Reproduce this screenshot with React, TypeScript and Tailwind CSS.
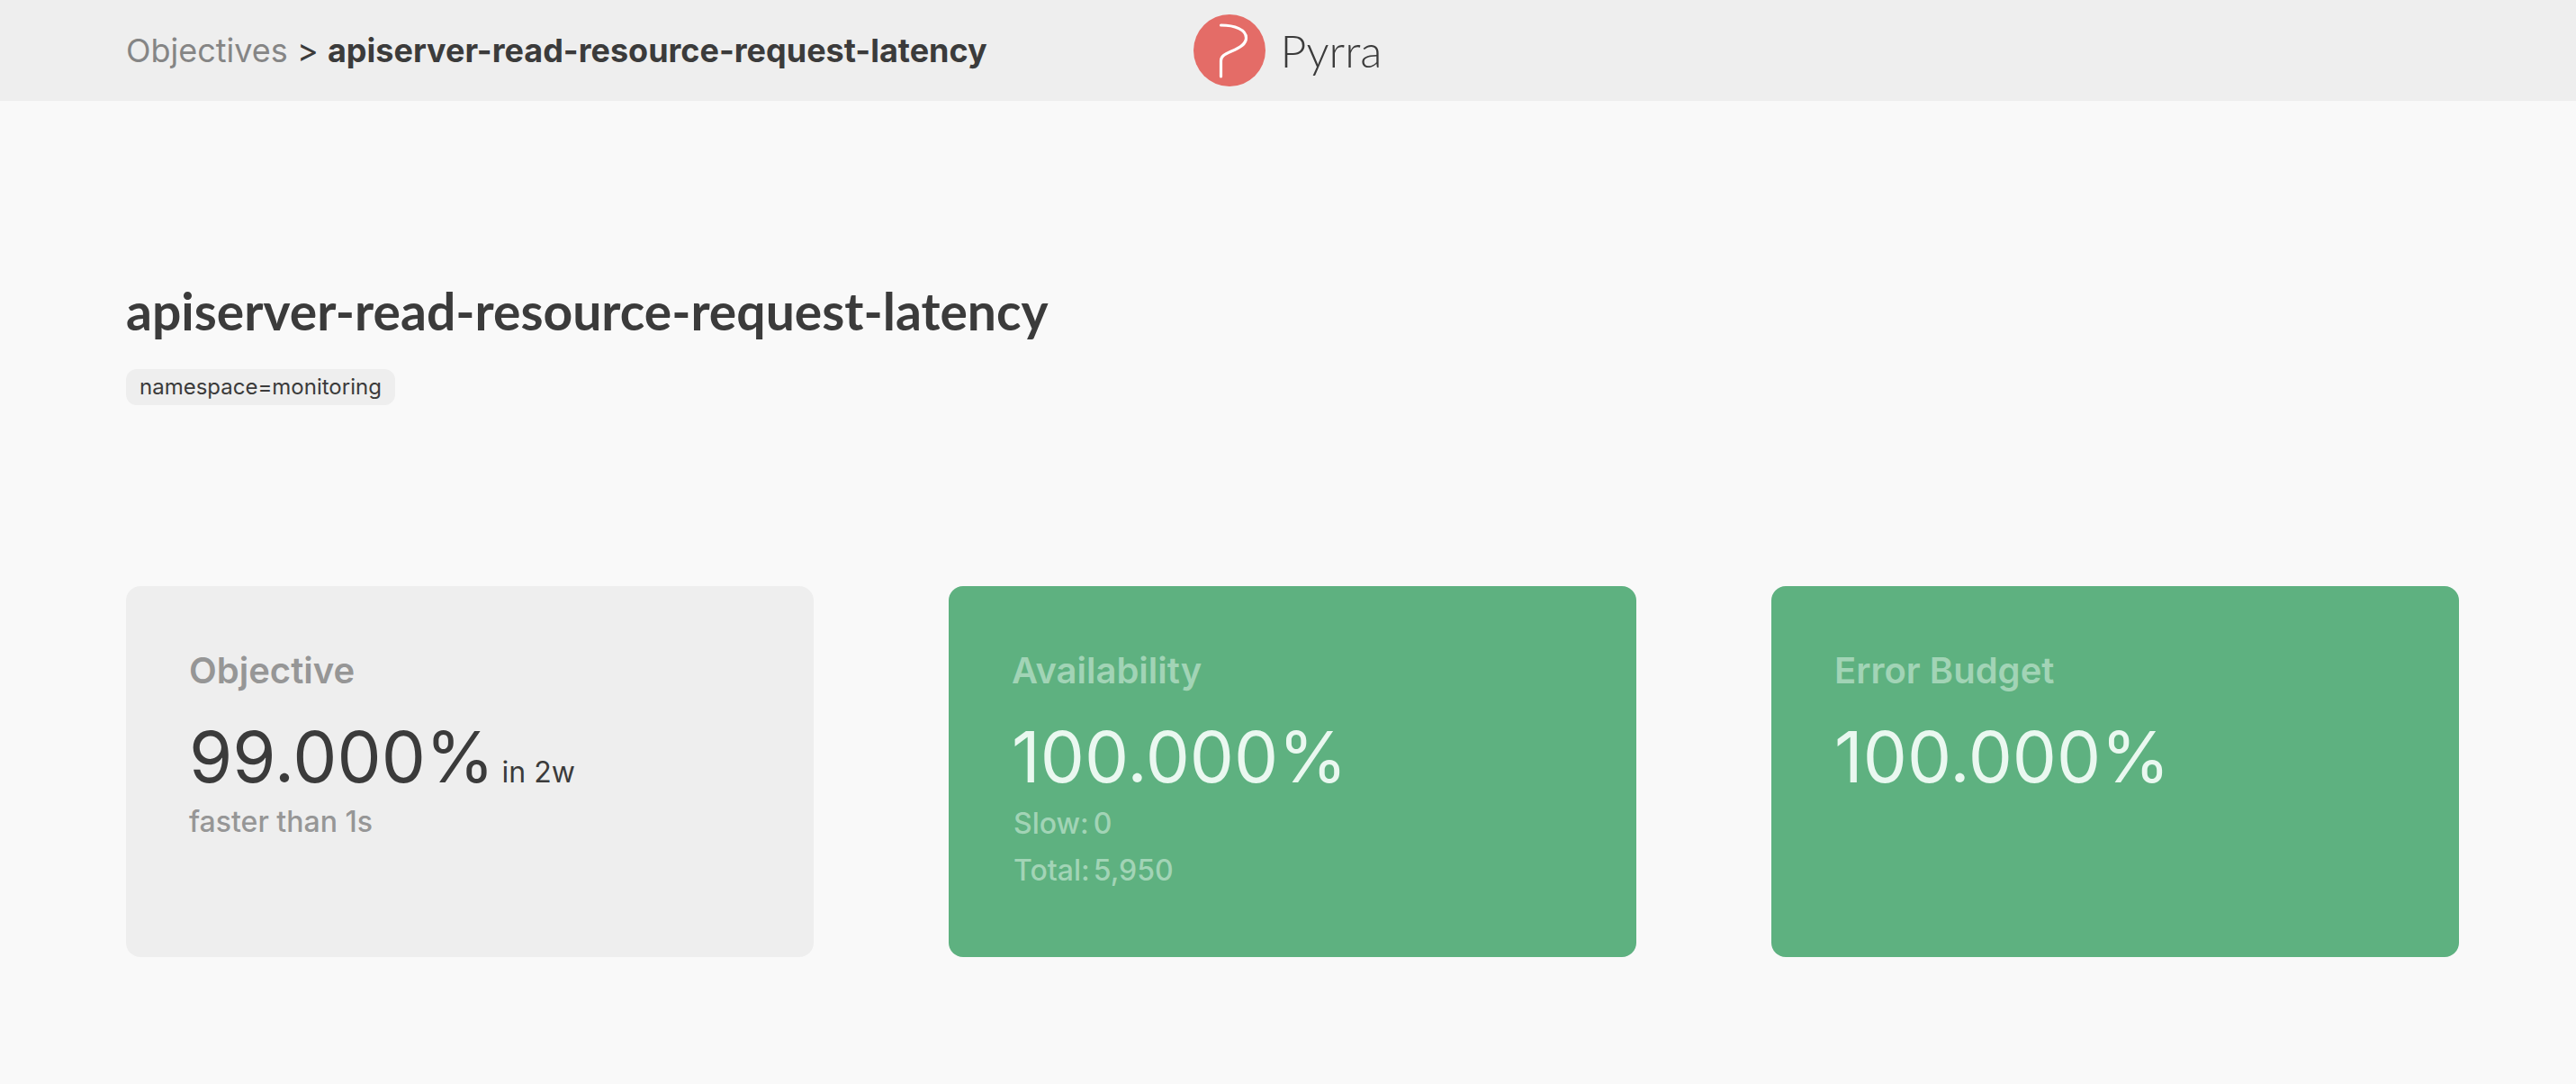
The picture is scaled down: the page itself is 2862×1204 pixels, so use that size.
import type { ReactNode } from 'react'
import { clsx } from 'clsx'

function Logo() {
  return (
    <a href="#home" aria-label="Pyrra" className="flex items-center gap-4">
      <svg viewBox="0 0 80 80" className="size-20" aria-hidden="true">
        <circle cx="40" cy="40" r="40" fill="#e46c67" />
        <path
          d="M30.5 12C46 12 58.5 17 58.5 26C58.5 33 52 37 42 41C34 44.500 30.500 46.500 30.500 51.500V69"
          fill="none"
          stroke="#ffffff"
          strokeWidth="3.200"
          strokeLinecap="round"
        />
      </svg>
      <span className="font-['Lato',sans-serif] text-[50px] leading-none font-light text-[#3b3b3b]">Pyrra</span>
    </a>
  )
}

function Card({ title, success, children }: { title: string; success?: boolean; children: ReactNode }) {
  return (
    <section
      className={clsx(
        'rounded-2xl p-[70px]',
        success ? 'bg-[#5eb180] text-[#eaf8f0]' : 'bg-[#eeeeee] text-[#3b3b3b]',
      )}
    >
      <h2
        className={clsx(
          'mb-6 text-[40px] leading-[48px] font-semibold',
          success ? 'text-[#a2d4b6]' : 'text-[#969696]',
        )}
      >
        {title}
      </h2>
      {children}
    </section>
  )
}

const counts = [
  { label: 'Slow:', value: '0' },
  { label: 'Total:', value: '5,950' },
]

export default function App() {
  return (
    <div className="min-h-screen bg-[#f9f9f9] font-['Inter',sans-serif] text-[#3b3b3b]">
      <header className="grid h-28 grid-cols-[1fr_auto_1fr] items-center bg-[#eeeeee] px-[140px]">
        <nav aria-label="Breadcrumb" className="text-4xl whitespace-nowrap">
          <a href="#objectives" className="text-[#858585]">Objectives</a>
          {' > '}
          <span className="font-bold">apiserver-read-resource-request-latency</span>
        </nav>
        <Logo />
      </header>
      <main className="pt-50 pr-[130px] pl-[140px]">
        <h1 className="font-['Lato',sans-serif] text-[57px] leading-[66px] font-bold">
          apiserver-read-resource-request-latency
        </h1>
        <div className="mt-8 flex">
          <span className="rounded-xl bg-[#eeeeee] px-[15px] py-1.5 text-2xl leading-[28px]">
            namespace=monitoring
          </span>
        </div>
        <div className="mt-[201px] grid grid-cols-3 gap-[150px]">
          <Card title="Objective">
            <p className="text-[78px] leading-[96px]">
              99.000%<span className="ml-2 text-[32px] leading-none">in 2w</span>
            </p>
            <p className="text-[32px] leading-[48px] font-medium text-[#969696]">faster than 1s</p>
          </Card>
          <Card title="Availability" success>
            <p className="text-[78px] leading-[96px]">100.000%</p>
            <table className="text-[32px] leading-[48px] font-medium text-[#a2d4b6]">
              <tbody>
                {counts.map(({ label, value }) => (
                  <tr key={label}>
                    <th scope="row" className="p-0.5 text-left font-medium">{label}</th>
                    <td className="p-0.5">{value}</td>
                  </tr>
                ))}
              </tbody>
            </table>
          </Card>
          <Card title="Error Budget" success>
            <p className="text-[78px] leading-[96px]">100.000%</p>
          </Card>
        </div>
      </main>
    </div>
  )
}
